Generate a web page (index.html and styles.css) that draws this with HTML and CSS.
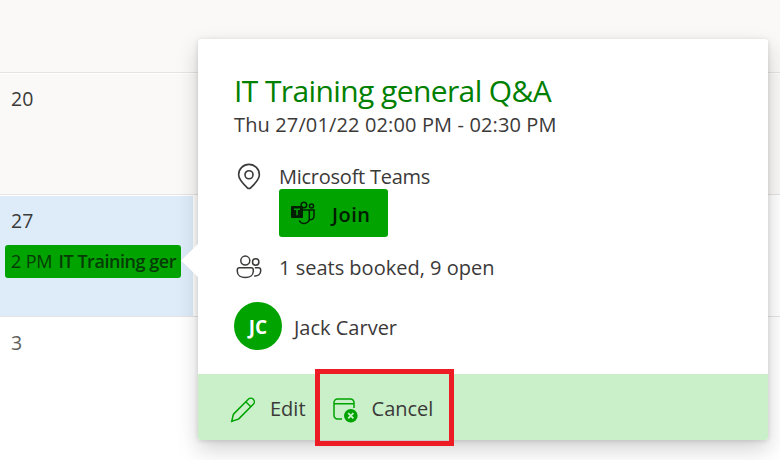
FILE: index.html
```html
<!DOCTYPE html>
<html lang="en">
<head>
    <meta charset="UTF-8">
    <meta name="viewport" content="width=device-width, initial-scale=1.0">
    <title>Calendar</title>
    <link rel="stylesheet" href="styles.css">
</head>
<body>

    <div class="calendar">
        <div class="week past"></div>
        <div class="week past">
            <div class="day"><span class="date">20</span></div>
        </div>
        <div class="week">
            <div class="day today">
                <span class="date">27</span>
                <div class="event"><span class="event-time">2 PM</span><strong class="event-name">IT Training ger</strong></div>
            </div>
        </div>
        <div class="week">
            <div class="day"><span class="date next-month">3</span></div>
        </div>
    </div>

    <div class="card">
        <div class="beak"></div>
        <div class="card-body">
            <h2>IT Training general Q&amp;A</h2>
            <p class="when">Thu 27/01/22 02:00 PM - 02:30 PM</p>

            <div class="row location">
                <svg class="icon" viewBox="0 0 24 24" width="30" height="30">
                    <path d="M12 21.2c-.5 0-1-.2-1.3-.5C7 17.200 3.700 14 3.700 10.200a8.300 8.300 0 0 1 16.600 0c0 3.800-3.300 7-7 10.500-.3.300-.8.500-1.300.5z"/>
                    <circle cx="12" cy="10.200" r="3.200"/>
                </svg>
                <div>
                    <p class="place">Microsoft Teams</p>
                    <button class="join">
                        <svg class="teams" viewBox="0 0 24 24" width="24" height="24">
                            <circle cx="12.900" cy="4" r="2.800"/>
                            <circle cx="20.500" cy="5" r="2"/>
                            <path d="M11 9h7.300v7.500a5.300 5.300 0 0 1-10 3"/>
                            <path d="M18.300 9H23v6.200a3.600 3.600 0 0 1-4.800 3.400"/>
                            <rect class="solid" x="0" y="5" width="12" height="12" rx="1"/>
                            <path class="letter" d="M3 8.200h6M6 8.200v6"/>
                        </svg>
                        <span>Join</span>
                    </button>
                </div>
            </div>

            <div class="row seats">
                <svg class="icon people" viewBox="0 0 26 26" width="26" height="26">
                    <circle cx="9.300" cy="6.600" r="4.500"/>
                    <circle cx="19.700" cy="8" r="3.200"/>
                    <path d="M3.500 13.700h11.600a2.200 2.200 0 0 1 2.200 2.200v1.300c0 4-3.500 6.300-8 6.300s-8-2.300-8-6.300v-1.300a2.200 2.200 0 0 1 2.200-2.200z"/>
                    <path d="M18.800 13.700h3.700a2.200 2.200 0 0 1 2.200 2.200v.8c0 3.500-2.500 5.500-6.500 5.200"/>
                </svg>
                <p class="places">1 seats booked, 9 open</p>
            </div>

            <div class="row person">
                <span class="avatar">JC</span>
                <p class="name">Jack Carver</p>
            </div>
        </div>

        <div class="actions">
            <button class="action edit">
                <svg viewBox="0 0 26 26" width="26" height="26">
                    <path d="M1.700 24.300l1.500-6.300a3 3 0 0 1 .8-1.400L18.300 2.300a3.500 3.500 0 0 1 5 5L9 21.600a3 3 0 0 1-1.400.8zM15.800 4.800l5 5"/>
                </svg>
                <span>Edit</span>
            </button>
            <button class="action cancel">
                <svg viewBox="0 0 26 26" width="26" height="26">
                    <path d="M10 22H5.500A3.500 3.500 0 0 1 2 18.500v-13A3.500 3.500 0 0 1 5.500 2h13A3.500 3.500 0 0 1 22 5.500V11M2 6.800h20"/>
                    <circle class="badge" cx="18.800" cy="18.800" r="6.800"/>
                    <path class="cross" d="M16.200 16.200l5.200 5.200M21.400 16.200l-5.200 5.200"/>
                </svg>
                <span>Cancel</span>
            </button>
        </div>
    </div>

    <div class="highlight"></div>

</body>
</html>
```

FILE: styles.css
```css
* {
    box-sizing: border-box;
}
body {
    margin: 0;
    height: 460px;
    overflow: hidden;
    position: relative;
    background: #fff;
    color: #3b3a39;
    font-family: "Open Sans", "Noto Sans", sans-serif;
    font-size: 20px;
}
h2, p {
    margin: 0;
    font-weight: 400;
    white-space: nowrap;
}
button {
    border: none;
    font: inherit;
    color: inherit;
    cursor: pointer;
}
svg {
    fill: none;
    flex: none;
}
.week {
    height: 122px;
    border-bottom: 1px solid #e6e4e2;
    padding-top: 1px;
}
.past {
    background: #faf9f8;
    box-shadow: inset 0 1px #fff;
}
.week:first-child {
    height: 73px;
    box-shadow: none;
}
.week:last-child {
    border-bottom: none;
}
.day {
    width: 193px;
    height: 120px;
    padding: 10px 5px 0;
}
.today {
    background: #deecf9;
}
.date {
    display: block;
    padding-left: 6px;
    line-height: 30px;
    font-size: 19.5px;
}
.next-month {
    color: #605e5c;
}
.event {
    width: 176px;
    height: 33px;
    margin-top: 9px;
    padding: 0 0 0 6px;
    border-radius: 3px;
    background: #00a300;
    color: #063b06;
    font-size: 18px;
    line-height: 32px;
    letter-spacing: -0.15px;
    white-space: nowrap;
    display: flex;
    gap: 6px;
}
.event-name {
    font-weight: 600;
    letter-spacing: -0.45px;
}
/* event popup, floats over the calendar */
.card {
    position: absolute;
    left: 198px;
    top: 39px;
    width: 570px;
    height: 401px;
    display: flex;
    flex-direction: column;
    background: #fff;
    border-radius: 3px;
    box-shadow: 0 9px 22px rgba(0, 0, 0, 0.18), 0 1px 5px rgba(0, 0, 0, 0.13);
}
.beak {
    position: absolute;
    left: -17px;
    top: 204px;
    width: 18px;
    height: 35px;
    background: #fff;
    clip-path: polygon(0 50%, 100% 0, 100% 100%);
}
.card-body {
    flex: 1;
    padding: 32px 36px 0;
}
h2 {
    font-size: 30px;
    line-height: 39px;
    letter-spacing: -0.6px;
    color: #008000;
}
.when {
    line-height: 29px;
    letter-spacing: 0.13px;
}
.row {
    display: flex;
}
.icon {
    stroke: #3b3a39;
    stroke-width: 1.3;
}
.location {
    margin-top: 23px;
    gap: 15px;
}
.place {
    line-height: 29px;
    letter-spacing: -0.25px;
}
.join {
    display: flex;
    align-items: center;
    gap: 17px;
    width: 109px;
    height: 48px;
    margin-top: -2px;
    padding: 0 0 0 12px;
    background: #00a300;
    border-radius: 3px;
    color: #001c00;
    font-weight: 600;
}
.join span {
    margin-top: 2px;
    letter-spacing: 0.5px;
}
.teams {
    stroke: #031f03;
    stroke-width: 1.5;
}
.teams .solid {
    fill: #031f03;
    stroke: none;
}
.teams .letter {
    stroke: #00a300;
}
.seats {
    margin-top: 17px;
    padding-left: 2px;
    gap: 17px;
}
.people {
    stroke-width: 1.5;
}
.places {
    line-height: 28px;
}
.person {
    margin-top: 20px;
    gap: 12px;
    align-items: center;
}
.name {
    padding-top: 2px;
}
.avatar {
    width: 48px;
    height: 48px;
    border-radius: 50%;
    background: #00a300;
    color: #fff;
    font-size: 19px;
    font-weight: 700;
    line-height: 50px;
    text-align: center;
}
.actions {
    display: flex;
    height: 66px;
    padding-left: 32px;
    gap: 26px;
    background: #c9f0c9;
    border-radius: 0 0 3px 3px;
}
.action {
    display: flex;
    align-items: center;
    gap: 14px;
    padding: 0;
    background: none;
}
.action svg {
    stroke: #00a300;
    stroke-width: 1.5;
    margin-top: 6px;
}
.action span {
    margin-top: 2px;
}
.action .badge {
    fill: #00a300;
    stroke: none;
}
.action .cross {
    stroke: #c9f0c9;
    stroke-width: 1.8;
}
/* red frame around the cancel action */
.highlight {
    position: absolute;
    left: 315px;
    top: 369px;
    width: 139px;
    height: 77px;
    border: 5px solid #ed1c24;
}
```
